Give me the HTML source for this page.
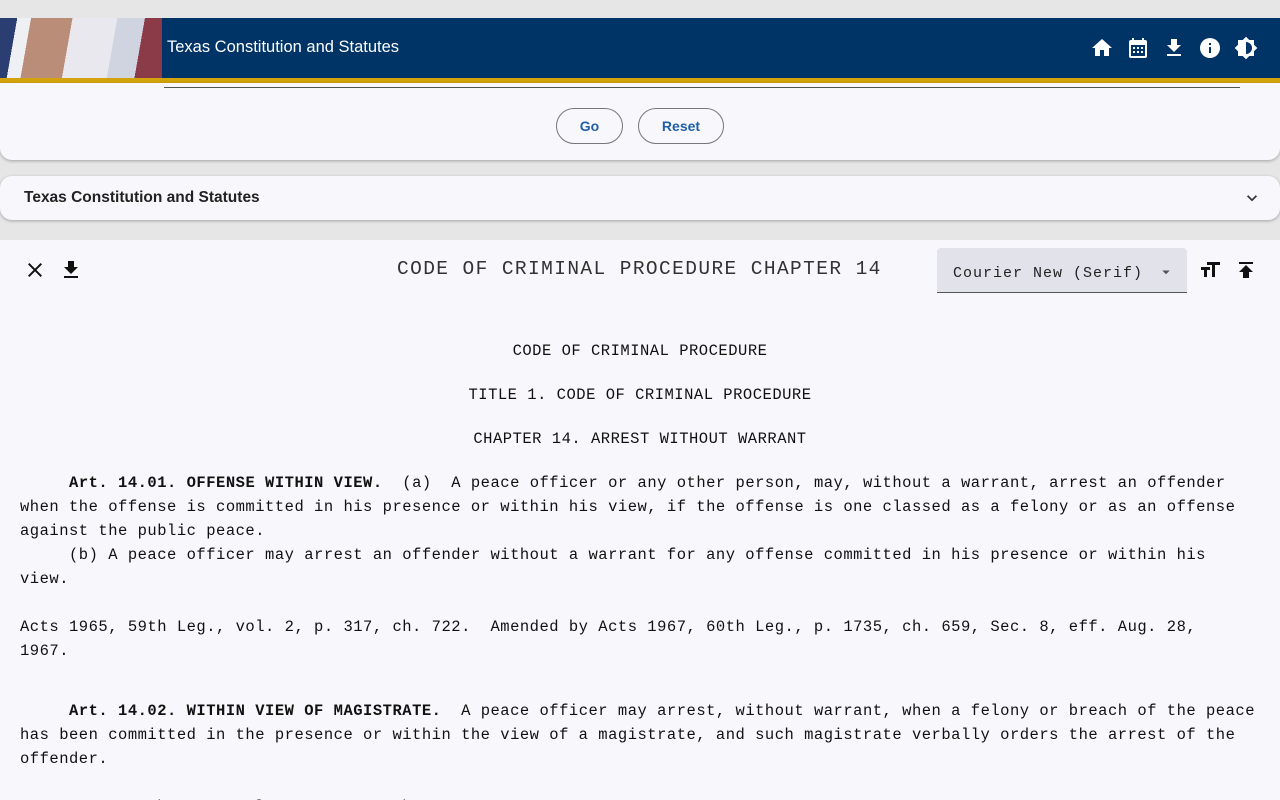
<!DOCTYPE html>
<html><head><meta charset="utf-8"><style>
*{box-sizing:border-box;margin:0;padding:0}
html,body{width:1280px;height:800px;overflow:hidden}
body{background:#e6e6e6;font-family:"Liberation Sans",sans-serif;position:relative}
.hdr{position:absolute;top:18px;left:0;width:1280px;height:60px;background:#003366}
.gold{position:absolute;top:78px;left:0;width:1280px;height:5px;background:#d4a20c}
.img{position:absolute;top:18px;left:0;width:162px;height:60px;background:linear-gradient(100deg,#2a3e72 0 10%,#eef0f4 10% 18%,#b98d78 18% 42%,#e8e8ee 42% 68%,#d0d3e0 68% 84%,#8b3a48 84% 100%)}
.title{position:absolute;top:38px;left:167px;color:#fff;font-size:16.5px}
.icons{position:absolute;top:36px;left:1090px}
.icons svg{position:absolute;width:24px;height:24px;fill:#fff}
.p1{position:absolute;top:83px;left:0;width:1280px;height:77px;background:#f8f8fc;border-radius:0 0 12px 12px;box-shadow:0 1px 3px rgba(0,0,0,.3)}
.line{position:absolute;top:4px;left:164px;width:1076px;height:1px;background:#555}
.btn{position:absolute;top:25px;height:36px;border:1px solid #777;border-radius:18px;color:#1f5fa8;font-size:14px;font-weight:bold;text-align:center;line-height:34px}
.p2{position:absolute;top:176px;left:0;width:1280px;height:44px;background:#f8f8fc;border-radius:12px;box-shadow:0 1px 3px rgba(0,0,0,.3)}
.p2 span{position:absolute;left:24px;top:13px;font-size:15.5px;font-weight:bold;color:#222}
.p3{position:absolute;top:240px;left:0;width:1280px;height:560px;background:#f8f8fc;overflow:hidden}
.mono{font-family:"Liberation Mono","Courier New",monospace}
.dt{position:absolute;top:18px;left:397px;font-size:19.5px;color:#333;letter-spacing:1.4px;white-space:nowrap}
.sel{position:absolute;top:8px;left:937px;width:250px;height:45px;background:#e1e2ea;border-bottom:1px solid #555;border-radius:4px 4px 0 0}
.sel span{position:absolute;left:16px;top:17px;font-size:15px;color:#222;letter-spacing:1px;white-space:nowrap}
pre{position:absolute;left:20px;font-size:15.5px;line-height:24px;color:#111;font-family:"Liberation Mono","Courier New",monospace;letter-spacing:0.5px}
.c{position:absolute;left:0;width:1280px;text-align:center;font-size:15.5px;color:#111;letter-spacing:0.5px;line-height:24px}
</style></head><body>
<div class="hdr"></div><div class="img"></div><div class="gold"></div>
<div class="title">Texas Constitution and Statutes</div>
<div class="icons">
<svg style="left:0" viewBox="0 0 24 24"><path d="M10 20v-6h4v6h5v-8h3L12 3 2 12h3v8z"/></svg>
<svg style="left:36px" viewBox="0 0 24 24"><path d="M19 4h-1V2h-2v2H8V2H6v2H5a2 2 0 0 0-2 2v14a2 2 0 0 0 2 2h14a2 2 0 0 0 2-2V6a2 2 0 0 0-2-2zm0 16H5V9h14zM7 11h2v2H7zm4 0h2v2h-2zm4 0h2v2h-2zM7 15h2v2H7zm4 0h2v2h-2zm4 0h2v2h-2z"/></svg>
<svg style="left:72px" viewBox="0 0 24 24"><path d="M19 9h-4V3H9v6H5l7 7zM5 18v2h14v-2z"/></svg>
<svg style="left:108px" viewBox="0 0 24 24"><path d="M12 2a10 10 0 1 0 0 20 10 10 0 0 0 0-20zm1 15h-2v-6h2zm0-8h-2V7h2z"/></svg>
<svg style="left:144px" viewBox="0 0 24 24"><path d="M20 8.69V4h-4.69L12 .69 8.69 4H4v4.69L.69 12 4 15.31V20h4.69L12 23.31 15.31 20H20v-4.69L23.31 12zM12 18V6a6 6 0 0 1 0 12z"/></svg>
</div>
<div class="p1"><div class="line"></div>
<div class="btn" style="left:556px;width:67px">Go</div>
<div class="btn" style="left:638px;width:86px">Reset</div></div>
<div class="p2"><span>Texas Constitution and Statutes</span>
<svg style="position:absolute;right:18px;top:12px" width="20" height="20" viewBox="0 0 24 24"><path d="M7.4 8.6 12 13.2l4.6-4.6L18 10l-6 6-6-6z" fill="#333"/></svg></div>
<div class="p3">
<svg style="position:absolute;left:23px;top:18px" width="24" height="24" viewBox="0 0 24 24"><path d="M19 6.4 17.6 5 12 10.6 6.4 5 5 6.4 10.6 12 5 17.6 6.4 19 12 13.4 17.6 19 19 17.6 13.4 12z" fill="#111"/></svg>
<svg style="position:absolute;left:59px;top:18px" width="24" height="24" viewBox="0 0 24 24"><path d="M19 9h-4V3H9v6H5l7 7zM5 18v2h14v-2z" fill="#111"/></svg>
<div class="dt mono">CODE OF CRIMINAL PROCEDURE CHAPTER 14</div>
<div class="sel"><span class="mono">Courier New (Serif)</span><svg style="position:absolute;left:220px;top:15px" width="18" height="18" viewBox="0 0 24 24"><path d="M7 10l5 5 5-5z" fill="#555"/></svg></div>
<svg style="position:absolute;left:1198px;top:18px" width="24" height="24" viewBox="0 0 24 24"><path d="M9 4v3h5v12h3V7h5V4zM3 12h3v7h3v-7h3V9H3z" fill="#111"/></svg>
<svg style="position:absolute;left:1234px;top:18px" width="24" height="24" viewBox="0 0 24 24"><path d="M5 4v2h14V4zm0 10h4v6h6v-6h4l-7-7z" fill="#111"/></svg>
<div class="c mono" style="top:99px">CODE OF CRIMINAL PROCEDURE</div>
<div class="c mono" style="top:143px">TITLE 1. CODE OF CRIMINAL PROCEDURE</div>
<div class="c mono" style="top:187px">CHAPTER 14. ARREST WITHOUT WARRANT</div>
<pre style="top:231px">     <b>Art. 14.01. OFFENSE WITHIN VIEW.</b>  (a)  A peace officer or any other person, may, without a warrant, arrest an offender
when the offense is committed in his presence or within his view, if the offense is one classed as a felony or as an offense
against the public peace.
     (b) A peace officer may arrest an offender without a warrant for any offense committed in his presence or within his
view.

Acts 1965, 59th Leg., vol. 2, p. 317, ch. 722.  Amended by Acts 1967, 60th Leg., p. 1735, ch. 659, Sec. 8, eff. Aug. 28,
1967.</pre>
<pre style="top:459px">     <b>Art. 14.02. WITHIN VIEW OF MAGISTRATE.</b>  A peace officer may arrest, without warrant, when a felony or breach of the peace
has been committed in the presence or within the view of a magistrate, and such magistrate verbally orders the arrest of the
offender.

Acts 1965, 59th Leg., vol. 2, p. 317, ch. 722.</pre>
</div>
</body></html>
